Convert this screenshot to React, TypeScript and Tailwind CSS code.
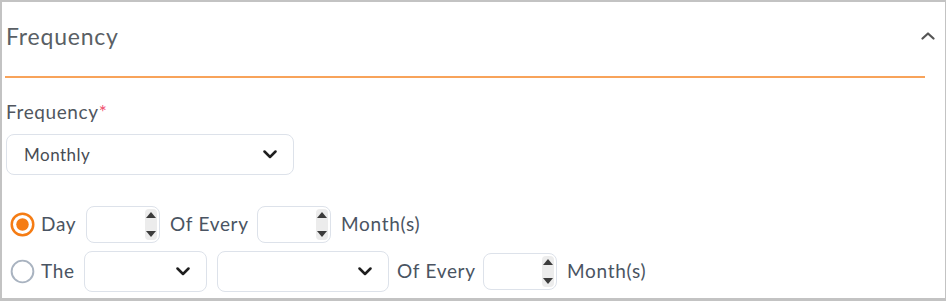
import React from "react";

const font = { fontFamily: "Lato, 'Open Sans', sans-serif" };

function Chevron({ className = "" }: { className?: string }) {
  return (
    <svg viewBox="0 0 14 9" className={className} fill="none">
      <path d="M1.5 1.5 7 7l5.5-5.5" stroke="currentColor" strokeWidth="2.5" strokeLinecap="round" strokeLinejoin="round" />
    </svg>
  );
}

function SelectBox({ width, value = "" }: { width: string; value?: string }) {
  return (
    <div className={`${width} h-[41px] flex items-center justify-between rounded-lg border border-[#dde2ea] bg-white pl-[17px] pr-[16px]`}>
      <span className="text-[17px] tracking-[0.5px] text-[#474c54]">{value}</span>
      <Chevron className="w-[14px] h-[9px] text-[#1f1f1f]" />
    </div>
  );
}

function NumberBox() {
  return (
    <div className="w-[74px] h-[37px] flex justify-end items-stretch rounded-lg border border-[#dde2ea] bg-white py-[2px] pr-[2px]">
      <div className="w-[12px] flex flex-col items-center justify-between bg-[#ececec] rounded-sm py-[3px]">
        <svg viewBox="0 0 10 6" className="w-[10px] h-[6px]"><path d="M5 0 10 6H0z" fill="#3c3c3c" /></svg>
        <svg viewBox="0 0 10 6" className="w-[10px] h-[6px]"><path d="M0 0h10L5 6z" fill="#3c3c3c" /></svg>
      </div>
    </div>
  );
}

function Radio({ checked }: { checked?: boolean }) {
  return checked ? (
    <svg viewBox="0 0 26 26" className="w-[25px] h-[25px]">
      <circle cx="13" cy="13" r="11.2" fill="none" stroke="#f57c14" strokeWidth="2.6" />
      <circle cx="13" cy="13" r="6.5" fill="#f57c14" />
    </svg>
  ) : (
    <svg viewBox="0 0 26 26" className="w-[25px] h-[25px]">
      <circle cx="13" cy="13" r="11.3" fill="none" stroke="#a9b3c0" strokeWidth="2" />
    </svg>
  );
}

export default function App() {
  return (
    <div style={font} className="w-[946px] h-[301px] bg-white border-2 border-[#c3c3c3] border-r border-b-[3px] overflow-hidden">
      {/* Header */}
      <div className="flex items-center justify-between h-[74px] pl-[4px] pr-[10px]">
        <h2 className="text-[23px] tracking-[0.8px] text-[#5a5f65] pb-[6px]">Frequency</h2>
        <svg viewBox="0 0 14 8" className="w-[14px] h-[8px] mb-[7px]" fill="none">
          <path d="M1.5 6.5 7 1.5l5.5 5" stroke="#555" strokeWidth="2.2" strokeLinecap="round" strokeLinejoin="round" />
        </svg>
      </div>
      <div className="ml-[3px] w-[920px] h-[2px] bg-[#f8a35a]" />

      <div className="pl-[4px] text-[#4a5462] text-[19px] tracking-[0.7px]">
        <div className="pt-[22px] leading-[24px] tracking-[0.6px] text-[#50565e]">
          Frequency<span className="text-[#f0506e]">*</span>
        </div>
        <div className="mt-[10px] tracking-normal">
          <SelectBox width="w-[288px]" value="Monthly" />
        </div>

        <div className="mt-[31px] flex items-center h-[37px]">
          <div className="ml-[4px]"><Radio checked /></div>
          <span className="ml-[6px] w-[45px]">Day</span>
          <NumberBox />
          <span className="ml-[10px] w-[87px]">Of Every</span>
          <NumberBox />
          <span className="ml-[10px]">Month(s)</span>
        </div>

        <div className="mt-[8px] flex items-center h-[41px]">
          <div className="ml-[4px]"><Radio /></div>
          <span className="ml-[6px] w-[43px]">The</span>
          <SelectBox width="w-[123px]" />
          <div className="ml-[10px]"><SelectBox width="w-[172px]" /></div>
          <span className="ml-[8px] w-[86px]">Of Every</span>
          <NumberBox />
          <span className="ml-[10px]">Month(s)</span>
        </div>
      </div>
    </div>
  );
}
